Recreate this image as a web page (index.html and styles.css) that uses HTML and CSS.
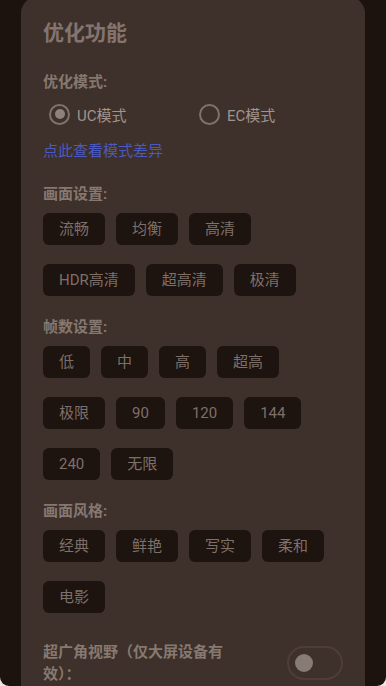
FILE: index.html
```html
<!DOCTYPE html>
<html lang="zh-CN">
<head>
<meta charset="utf-8">
<title>优化功能</title>
<link rel="stylesheet" href="styles.css">
</head>
<body>
<div class="screen">
  <div class="card">
    <h1 class="title">优化功能</h1>

    <div class="label first">优化模式:</div>
    <div class="radios">
      <label class="radio checked"><span class="dot"></span>UC模式</label>
      <label class="radio"><span class="dot"></span>EC模式</label>
    </div>
    <div class="link">点此查看模式差异</div>

    <div class="label">画面设置:</div>
    <div class="chips">
      <span class="chip">流畅</span>
      <span class="chip">均衡</span>
      <span class="chip">高清</span>
      <span class="chip">HDR高清</span>
      <span class="chip">超高清</span>
      <span class="chip">极清</span>
    </div>

    <div class="label">帧数设置:</div>
    <div class="chips">
      <span class="chip">低</span>
      <span class="chip">中</span>
      <span class="chip">高</span>
      <span class="chip">超高</span>
      <span class="chip">极限</span>
      <span class="chip">90</span>
      <span class="chip">120</span>
      <span class="chip">144</span>
      <span class="chip">240</span>
      <span class="chip">无限</span>
    </div>

    <div class="label">画面风格:</div>
    <div class="chips">
      <span class="chip">经典</span>
      <span class="chip">鲜艳</span>
      <span class="chip">写实</span>
      <span class="chip">柔和</span>
      <span class="chip">电影</span>
    </div>

    <div class="toggle-row">
      <div class="toggle-label">超广角视野（仅大屏设备有效）：</div>
      <div class="switch"><span class="knob"></span></div>
    </div>
  </div>
</div>
</body>
</html>
```

FILE: styles.css
```css
html, body {
  margin: 0;
  padding: 0;
}
body {
  background: #e9e6e4;
  font-family: Roboto, "Noto Sans CJK SC", sans-serif;
}
.screen {
  width: 386px;
  height: 686px;
  background: #1c120e;
  border-radius: 0 0 9px 9px;
  overflow: hidden;
}
.card {
  margin: -3px 21px 0 21px;
  padding: 22px 22px 40px 22px;
  background: #3e302a;
  border-radius: 16px;
  min-height: 800px;
}
.title {
  margin: 0;
  font-size: 21px;
  line-height: 28px;
  font-weight: 700;
  color: #837470;
}
.label {
  margin-top: 22px;
  font-size: 15px;
  line-height: 22px;
  font-weight: 700;
  color: #857870;
}
.label.first {
  margin-top: 24px;
}
.radios {
  display: flex;
  margin-top: 3px;
  height: 36px;
  align-items: center;
}
.radio {
  flex: 1;
  display: flex;
  align-items: center;
  padding-left: 6px;
  font-size: 15px;
  color: #a0948d;
}
.radio .dot {
  width: 17px;
  height: 17px;
  border: 2px solid #7e726c;
  border-radius: 50%;
  margin-right: 7px;
  position: relative;
}
.radio.checked .dot::after {
  content: "";
  position: absolute;
  left: 3.5px;
  top: 3.5px;
  width: 10px;
  height: 10px;
  border-radius: 50%;
  background: #8d827c;
}
.link {
  margin-top: 8px;
  font-size: 15px;
  line-height: 22px;
  color: #4a5ac0;
}
.link + .label {
  margin-top: 21px;
}
.chips {
  display: flex;
  flex-wrap: wrap;
  gap: 19px 11px;
  margin-top: 8px;
  margin-bottom: 20px;
}
.chips + .label {
  margin-top: 0;
}
.chip {
  display: block;
  height: 32px;
  line-height: 32px;
  padding: 0 16px;
  background: #1d130f;
  border-radius: 6px;
  font-size: 15px;
  color: #7d7069;
  box-sizing: border-box;
}
.toggle-row {
  display: flex;
  align-items: center;
  justify-content: space-between;
  margin-top: 28px;
}
.toggle-label {
  width: 190px;
  font-size: 15px;
  line-height: 22px;
  font-weight: 700;
  color: #867970;
}
.switch {
  width: 56px;
  height: 34px;
  border: 2px solid #4d3f38;
  border-radius: 17px;
  display: flex;
  align-items: center;
  padding-left: 6px;
  box-sizing: border-box;
}
.knob {
  width: 18px;
  height: 18px;
  border-radius: 50%;
  background: #877b75;
}
```
